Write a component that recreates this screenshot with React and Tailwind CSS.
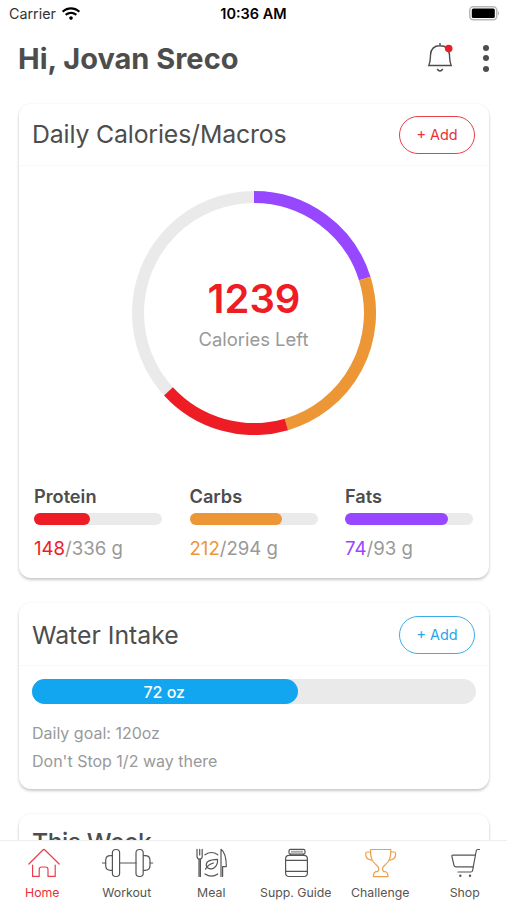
import { FaWifi } from "react-icons/fa";

const macros = [
  { name: "Protein", value: 148, goal: 336, percent: 44, bar: "bg-[#ee1c25]", text: "text-[#ee1c25]" },
  { name: "Carbs", value: 212, goal: 294, percent: 72.5, bar: "bg-[#ec9635]", text: "text-[#ec9635]" },
  { name: "Fats", value: 74, goal: 93, percent: 80.5, bar: "bg-[#9747ff]", text: "text-[#9747ff]" },
];

// Angles are in degrees, clockwise from the top
const segments = [
  { start: 0, end: 72.7, color: "#9747ff" },
  { start: 72.7, end: 163.8, color: "#ec9635" },
  { start: 163.8, end: 227.5, color: "#ee1c25" },
];

const arcPath = (start, end, r = 116, c = 122) => {
  const point = (deg) => {
    const rad = ((deg - 90) * Math.PI) / 180;
    return `${c + r * Math.cos(rad)} ${c + r * Math.sin(rad)}`;
  };
  return `M${point(start)}A${r} ${r} 0 ${end - start > 180 ? 1 : 0} 1 ${point(end)}`;
};

const HomeIcon = () => (
  <>
    <path d="M12.9 17 26.9 3Q27.9 2 28.9 3L43.2 17" />
    <path d="M16.6 18V29.4H23.2V22.5Q23.2 20 25.7 20H29.5Q32 20 32 22.5V29.4H39.2V18" />
  </>
);

const WorkoutIcon = () => (
  <>
    <path d="M1.5 16H4.7M18.5 16H35M49 16H51.7" />
    <path d="M11 8.7H9.5Q4.7 8.7 4.7 13.5V18.5Q4.7 23.3 9.5 23.3H11" />
    <path d="M42.5 8.7H44Q49 8.7 49 13.5V18.5Q49 23.3 44 23.3H42.5" />
    <rect x="11.4" y="2.5" width="7.2" height="27" rx="3.2" />
    <rect x="35" y="2.5" width="7.2" height="27" rx="3.2" />
  </>
);

const MealIcon = () => (
  <>
    <path d="M12 2.3V9.5Q12 12 14.7 12Q17.2 12 17.2 9.5V2.3M14 12V29.5M15.4 12V29.5M14.7 2.3V8" />
    <path d="M36 29.5V2.3Q41.3 6 41.3 19.6H37.6V29.5" />
    <path d="M20 7.8Q26.5 3.2 32.8 7.8M20 27Q26.5 31.4 32.8 27" />
    <path d="M20.5 22.2C22 19 25 17 28.5 16M21.8 20.2C19.8 14.8 24 12.6 32.5 12.3C33.2 19.5 27.5 24.2 22.2 20.5" />
  </>
);

const SuppIcon = () => (
  <>
    <rect x="19" y="2.4" width="16" height="4.8" rx="1.5" />
    <path d="M21.5 4.8H32.5" strokeDasharray="1 1" strokeWidth="2" strokeLinecap="butt" />
    <path d="M20.5 7.2V8.3M33.5 7.2V8.3" />
    <rect x="15.6" y="8.3" width="21.8" height="21.2" rx="3.5" />
    <path d="M15.6 13.3H37.4M15.6 24.3H37.4" />
  </>
);

const ChallengeIcon = () => (
  <>
    <path d="M16.5 2.5H36.8C36.8 11 35.5 14.5 31 18C27.8 20.5 28.3 23 29.5 24.7H31.5Q34 25.5 34 29.6H19.3Q19.3 25.5 22 24.7H23.8C25 23 25.5 20.5 22.3 18C17.8 14.5 16.5 11 16.5 2.5Z" />
    <path d="M16.6 5H13.3Q11.7 5 11.7 6.8C11.7 10.5 13.5 12.8 17.6 13.2M36.7 5H40Q41.7 5 41.7 6.8C41.7 10.5 39.8 12.8 35.7 13.2" />
  </>
);

const ShopIcon = () => (
  <>
    <path d="M40.5 2.5H38.8Q37.5 2.5 37.2 4L33.6 23.5Q33.3 25 31.8 25H19" />
    <path d="M36.3 8.2H13.8Q12.7 8.2 12.9 9.3L15 18.3Q15.4 19.9 17 19.9H34.2" />
    <circle cx="21.3" cy="28.7" r=".6" />
    <circle cx="31" cy="28.7" r=".6" />
  </>
);

const tabs = [
  { label: "Home", icon: HomeIcon, color: "text-[#e8303a]", stroke: "text-[#e8404a]" },
  { label: "Workout", icon: WorkoutIcon, color: "text-[#555]", stroke: "text-[#555]" },
  { label: "Meal", icon: MealIcon, color: "text-[#555]", stroke: "text-[#555]" },
  { label: "Supp. Guide", icon: SuppIcon, color: "text-[#555]", stroke: "text-[#555]" },
  { label: "Challenge", icon: ChallengeIcon, color: "text-[#555]", stroke: "text-[#eda04a]" },
  { label: "Shop", icon: ShopIcon, color: "text-[#555]", stroke: "text-[#555]" },
];

const StatusBar = () => (
  <div className="grid h-7 shrink-0 grid-cols-3 items-center pl-[9px] pr-[7px] text-black">
    <div className="flex items-center gap-[6px]">
      <span className="text-[14.3px] text-[#333]">Carrier</span>
      <FaWifi className="-mt-[2px] h-[15px] w-[18px]" />
    </div>
    <span className="pr-[2px] text-center text-[14.5px] font-semibold">10:36 AM</span>
    <svg className="-mt-[2px] justify-self-end" width="31" height="15" viewBox="0 0 31 15">
      <rect x=".75" y=".75" width="27" height="13" rx="3.5" fill="#fff" stroke="#b8b8b8" strokeWidth="1.5" />
      <rect x="2.8" y="2.6" width="23" height="9.4" rx="1.5" />
      <path d="M29 5Q31 7.2 29 9.6Z" fill="#b8b8b8" />
    </svg>
  </div>
);

const Header = () => (
  <header className="flex h-[60px] shrink-0 items-center pl-[18px] pr-[18px]">
    <h1 className="flex-1 pt-[2px] text-[29px] font-bold text-[#4d4d4d]">Hi, Jovan Sreco</h1>
    <svg width="28" height="32" viewBox="0 0 28 32" fill="none" stroke="#4d4d4d" strokeWidth="1.4" className="mr-[29px]">
      <path d="M14 1V4M2.8 23.5C4.5 20 4.2 17.5 4.5 13C4.8 7 8.5 3.8 14 3.8S23.2 7 23.5 13C23.8 17.5 23.5 20 25.2 23.5Z" />
      <path d="M11.2 27Q14 31 16.8 27" strokeWidth="1.6" />
      <circle cx="22.7" cy="6.5" r="3.8" fill="#ee1c25" stroke="none" />
    </svg>
    <div className="flex flex-col gap-[4.5px]">
      <i className="size-[6px] rounded-full bg-[#4d4d4d]" />
      <i className="size-[6px] rounded-full bg-[#4d4d4d]" />
      <i className="size-[6px] rounded-full bg-[#4d4d4d]" />
    </div>
  </header>
);

const Card = ({ title, titleClass, action, className, children }) => (
  <section className={`w-[470px] shrink-0 rounded-xl bg-white shadow-[0_2px_3px_rgba(0,0,0,0.2),0_0_3px_rgba(0,0,0,0.06)] ${className}`}>
    <div className="flex h-[62px] items-center justify-between border-b border-[#f9f9f9] pl-[13px] pr-[14px]">
      <h2 className={`text-[24.8px] text-[#4d4d4d] ${titleClass}`}>{title}</h2>
      {action && (
        <button className={`h-[38px] w-[76px] rounded-full border-[1.5px] pt-px text-[14.4px] ${action}`}>
          + Add
        </button>
      )}
    </div>
    {children}
  </section>
);

const CaloriesRing = () => (
  <div className="mx-auto mt-[25px] grid size-[244px] place-items-center">
    <svg viewBox="0 0 244 244" fill="none" strokeWidth="12" className="col-start-1 row-start-1 size-full">
      <circle cx="122" cy="122" r="116" stroke="#eaeaea" />
      {segments.map((s) => (
        <path key={s.color} d={arcPath(s.start, s.end)} stroke={s.color} />
      ))}
    </svg>
    <div className="col-start-1 row-start-1 flex flex-col items-center">
      <span className="text-[40px] leading-[48px] font-semibold text-[#ee1c25]">1239</span>
      <span className="mt-[4px] pr-px text-[18.4px] leading-6 text-[#999]">Calories Left</span>
    </div>
  </div>
);

const Macro = ({ macro }) => (
  <div className="w-[128px]">
    <p className="text-[18.2px] leading-6 font-semibold text-[#4d4d4d]">{macro.name}</p>
    <div className="mt-[5px] h-3 rounded-full bg-[#eaeaea]">
      <div className={`h-full rounded-full ${macro.bar}`} style={{ width: `${macro.percent}%` }} />
    </div>
    <p className="mt-[11px] text-[18.6px] leading-6 text-[#999]">
      <span className={macro.text}>{macro.value}</span>/{macro.goal} g
    </p>
  </div>
);

const TabBar = () => (
  <nav className="grid h-[60px] shrink-0 grid-cols-6 border-t border-[#eee] bg-white">
    {tabs.map(({ label, icon: Icon, color, stroke }) => (
      <div key={label} className="flex flex-col items-center pt-[6px]">
        <svg
          width="52"
          height="32"
          viewBox="0 0 52 32"
          fill="none"
          stroke="currentColor"
          strokeWidth="1.2"
          strokeLinecap="round"
          strokeLinejoin="round"
          className={`overflow-visible ${stroke}`}
        >
          <Icon />
        </svg>
        <span className={`mt-[6px] text-[12.3px] leading-4 whitespace-nowrap ${color}`}>{label}</span>
      </div>
    ))}
  </nav>
);

export default function App() {
  return (
    <div className="flex h-[900px] w-[507px] flex-col overflow-hidden bg-white font-['Inter',sans-serif]">
      <StatusBar />
      <Header />
      <main className="flex min-h-0 flex-1 flex-col gap-[25px] overflow-hidden pt-[16px] pl-[19px]">
        <Card
          title="Daily Calories/Macros"
          titleClass="pt-px tracking-[-0.14px]"
          action="border-[#e8404a] text-[#e8303a]"
          className="h-[474px]"
        >
          <CaloriesRing />
          <div className="mt-[49px] flex gap-[27.5px] pl-[15px]">
            {macros.map((m) => (
              <Macro key={m.name} macro={m} />
            ))}
          </div>
        </Card>
        <Card
          title="Water Intake"
          titleClass="pt-[2px]"
          action="border-[#3aaeea] text-[#2aa5ea]"
          className="h-[186px] pt-px"
        >
          <div className="mx-[13px] mt-[13px] h-[25px] rounded-full bg-[#eaeaea]">
            <div className="flex h-full w-[60%] items-center justify-center rounded-full bg-[#12a5f0] pr-[2px] text-[16px] font-medium text-white">
              72 oz
            </div>
          </div>
          <p className="mt-[15px] pl-[13px] text-[16px] leading-7 text-[#999]">
            Daily goal: 120oz
            <br />
            Don't Stop 1/2 way there
          </p>
        </Card>
        <Card title="This Week" titleClass="pb-[3px] font-medium tracking-[-0.5px]" className="h-[186px]" />
      </main>
      <TabBar />
    </div>
  );
}
